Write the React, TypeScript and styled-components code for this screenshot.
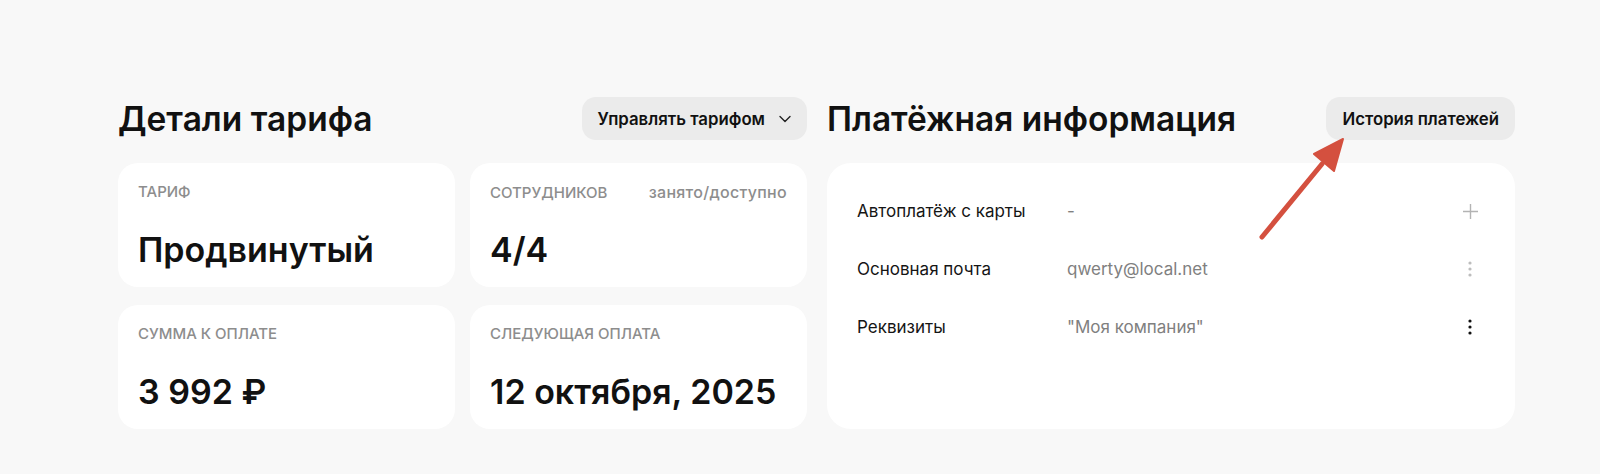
import React from "react";
import styled, { createGlobalStyle } from "styled-components";

const GlobalStyle = createGlobalStyle`
  html, body {
    margin: 0;
    padding: 0;
    background: #f8f8f8;
  }
  body {
    font-family: Inter, "Noto Sans", sans-serif;
    color: #111111;
    -webkit-font-smoothing: antialiased;
  }
  * { box-sizing: border-box; }
`;

const Page = styled.div`
  position: relative;
  width: 1600px;
  height: 474px;
  padding: 97px 0 0 118px;
  display: grid;
  grid-template-columns: 689px 688px;
  column-gap: 20px;
  align-items: start;
`;

const Column = styled.section`
  display: flex;
  flex-direction: column;
  gap: 23px;
`;

const Header = styled.div`
  height: 43px;
  display: flex;
  align-items: center;
  justify-content: space-between;
`;

const Title = styled.h2`
  margin: 0;
  font-size: 33.5px;
  font-weight: 600;
  letter-spacing: 0;
  color: #111111;
`;

const PillButton = styled.button`
  height: 43px;
  border: none;
  border-radius: 14px;
  background: #ebebeb;
  padding: 0 16px 0 16px;
  display: flex;
  align-items: center;
  gap: 14px;
  font-family: inherit;
  font-size: 16.8px;
  font-weight: 600;
  color: #111111;
  cursor: pointer;
`;

const Grid = styled.div`
  display: grid;
  grid-template-columns: 337px 337px;
  grid-auto-rows: 124px;
  column-gap: 15px;
  row-gap: 18px;
`;

const StatCard = styled.div`
  background: #ffffff;
  border-radius: 20px;
  padding: 20px 20px 17px;
  display: flex;
  flex-direction: column;
  justify-content: space-between;
`;

const LabelRow = styled.div`
  display: flex;
  justify-content: space-between;
  align-items: baseline;
`;

const Label = styled.span<{ $upper?: boolean }>`
  font-size: ${(p) => (p.$upper ? "15px" : "16px")};
  letter-spacing: ${(p) => (p.$upper ? "0" : "0.3px")};
  font-weight: 500;
  color: #8d8d8d;
  text-transform: ${(p) => (p.$upper ? "uppercase" : "none")};
  line-height: 18px;
`;

const Value = styled.div`
  font-size: 34px;
  font-weight: 600;
  line-height: 40px;
  color: #111111;
`;

const InfoCard = styled.div`
  background: #ffffff;
  border-radius: 24px;
  height: 266px;
  padding: 28px 30px;
  display: flex;
  flex-direction: column;
  gap: 18px;
`;

const InfoRow = styled.div`
  height: 40px;
  display: grid;
  grid-template-columns: 210px 1fr 30px;
  align-items: center;
  font-size: 17px;
`;

const RowLabel = styled.span`
  color: #151515;
`;

const RowValue = styled.span`
  color: #808080;
`;

const IconCell = styled.span<{ $color: string }>`
  display: flex;
  align-items: center;
  justify-content: center;
  color: ${(p) => p.$color};
`;

const ArrowOverlay = styled.svg`
  position: absolute;
  left: 0;
  top: 0;
  pointer-events: none;
`;

const Chevron = () => (
  <svg width="12" height="8" viewBox="0 0 12 8" fill="none">
    <path d="M1 1.5l5 5 5-5" stroke="#222" strokeWidth="1.4" strokeLinecap="round" strokeLinejoin="round" />
  </svg>
);

const Plus = () => (
  <svg width="17" height="17" viewBox="0 0 17 17" fill="none">
    <path d="M8.5 1v15M1 8.5h15" stroke="currentColor" strokeWidth="1.4" />
  </svg>
);

const Dots = () => (
  <svg width="4" height="16" viewBox="0 0 4 16" fill="currentColor">
    <circle cx="2" cy="2" r="1.6" />
    <circle cx="2" cy="8" r="1.6" />
    <circle cx="2" cy="14" r="1.6" />
  </svg>
);

const stats = [
  { label: "Тариф", hint: "", value: "Продвинутый" },
  { label: "Сотрудников", hint: "занято/доступно", value: "4/4" },
  { label: "Сумма к оплате", hint: "", value: "3 992 ₽" },
  { label: "Следующая оплата", hint: "", value: "12 октября, 2025" },
];

const rows = [
  { label: "Автоплатёж с карты", value: "-", icon: "plus", color: "#b3b3b3" },
  { label: "Основная почта", value: "qwerty@local.net", icon: "dots", color: "#bdbdbd" },
  { label: "Реквизиты", value: "\"Моя компания\"", icon: "dots", color: "#111111" },
];

export default function App() {
  return (
    <>
      <GlobalStyle />
      <Page>
        <Column>
          <Header>
            <Title>Детали тарифа</Title>
            <PillButton>
              Управлять тарифом
              <Chevron />
            </PillButton>
          </Header>
          <Grid>
            {stats.map((s) => (
              <StatCard key={s.label}>
                <LabelRow>
                  <Label $upper>{s.label}</Label>
                  {s.hint && <Label>{s.hint}</Label>}
                </LabelRow>
                <Value>{s.value}</Value>
              </StatCard>
            ))}
          </Grid>
        </Column>
        <Column>
          <Header>
            <Title>Платёжная информация</Title>
            <PillButton>История платежей</PillButton>
          </Header>
          <InfoCard>
            {rows.map((r) => (
              <InfoRow key={r.label}>
                <RowLabel>{r.label}</RowLabel>
                <RowValue>{r.value}</RowValue>
                <IconCell $color={r.color}>{r.icon === "plus" ? <Plus /> : <Dots />}</IconCell>
              </InfoRow>
            ))}
          </InfoCard>
        </Column>
        <ArrowOverlay width="1600" height="474" viewBox="0 0 1600 474">
          <line x1="1262" y1="237" x2="1322" y2="164" stroke="#d4503f" strokeWidth="5" strokeLinecap="round" />
          <polygon points="1343,139 1314,154 1334,171" fill="#d4503f" stroke="#d4503f" strokeWidth="2" strokeLinejoin="round" />
        </ArrowOverlay>
      </Page>
    </>
  );
}
